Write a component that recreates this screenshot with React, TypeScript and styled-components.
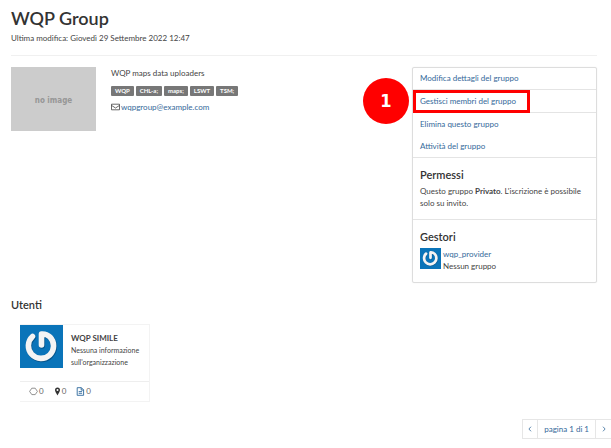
import React from "react";
import styled, { createGlobalStyle, css } from "styled-components";

const GlobalStyle = createGlobalStyle`
  *, *::before, *::after { box-sizing: border-box; }
  body {
    margin: 0;
    background: #fff;
    color: #444;
    font: 8px/12px Lato, sans-serif;
    overflow-x: hidden;
  }
  h1, h2, h3, p, ul { margin: 0; padding: 0; }
  ul { list-style: none; }
`;

const Page = styled.main`
  padding: 8px 14px 0 11px;
`;

const Header = styled.header`
  height: 48px;
  border-bottom: 1px solid #f0f0f0;
`;

const Title = styled.h1`
  color: #333;
  font-size: 18px;
  line-height: 20px;
  font-weight: 600;
`;

const Modified = styled.p`
  margin-top: 4px;
`;

const Columns = styled.div`
  display: grid;
  grid-template-columns: 85px 1fr 185px;
  column-gap: 15px;
  align-items: start;
  margin-top: 11px;
`;

const Placeholder = styled.div`
  display: flex;
  align-items: center;
  justify-content: center;
  height: 64px;
  padding-top: 4px;
  background: #ccc;
  color: #969696;
  font: bold 8px/12px "DejaVu Sans Condensed", "DejaVu Sans", sans-serif;
`;

const Tags = styled.ul`
  display: flex;
  gap: 2px;
  margin-top: 7px;
`;

const Tag = styled.li`
  padding: 0 4px;
  border-radius: 1px;
  background: #777;
  color: #fff;
  font-size: 6px;
  line-height: 10px;
  font-weight: 700;
`;

const Link = styled.a`
  color: #34699a;
  text-decoration: none;
`;

const Mail = styled.p`
  display: flex;
  align-items: center;
  gap: 1px;
  margin-top: 5px;
`;

const Panel = styled.aside`
  border: 1px solid #ddd;
  border-radius: 2px;
  box-shadow: 0 0 1px #ddd;
`;

const Action = styled.li<{ $divided?: boolean }>`
  position: relative;
  padding: 5px 7px;
  height: 22px;
  ${(p) => p.$divided && css`
    height: 23px;
    border-bottom: 1px solid #e4e4e4;
  `}
  &:first-child {
    height: 22px;
    padding-top: 4px;
  }
`;

const Highlight = styled.span`
  position: absolute;
  top: 0;
  left: 0;
  width: 117px;
  height: 23px;
  border: 3px solid #f00;
`;

const Step = styled.span`
  position: absolute;
  top: -12px;
  left: -50px;
  width: 46px;
  height: 46px;
  border-radius: 50%;
  background: #f00;
  color: #fff;
  font: bold 18px/46px "DejaVu Sans Condensed", "DejaVu Sans", sans-serif;
  text-align: center;
`;

const Section = styled.section`
  padding: 10px 7px;
  border-top: 1px solid #e4e4e4;
`;

const Heading = styled.h2`
  color: #333;
  font-size: 11px;
  line-height: 14px;
  font-weight: 600;
`;

const SectionText = styled.p`
  margin-top: 3px;
`;

const Manager = styled.div`
  display: flex;
  gap: 2px;
  margin-top: 4px;
`;

const Users = styled.section`
  margin-top: 15px;
`;

const Card = styled.article`
  width: 130px;
  margin: 12px 0 0 9px;
  border: solid #f3f3f3;
  border-width: 1px 1px 1px 0;
`;

const CardBody = styled.div`
  display: flex;
  gap: 8px;
  height: 56px;
`;

const CardText = styled.div`
  padding-top: 7px;
  font-size: 7px;
`;

const UserName = styled.h3`
  font-size: 8px;
  line-height: 12px;
  font-weight: 700;
`;

const Stats = styled.ul`
  display: flex;
  gap: 10px;
  padding: 3px 9px 4px;
  border-top: 1px solid #eee;
  color: #666;
`;

const Stat = styled.li`
  display: flex;
  align-items: center;
  gap: 1px;
`;

const Pager = styled.nav`
  display: flex;
  justify-content: flex-end;
  margin: 17px -17px 0 0;
`;

const PageButton = styled.button`
  height: 20px;
  margin-left: -1px;
  padding: 0 5px;
  border: 1px solid #e6e6e6;
  background: #fff;
  color: #34699a;
  font: 8px/18px Lato, sans-serif;
  &:last-child { padding: 0 7px 0 6px; }
`;

const PageLabel = styled.span`
  height: 20px;
  margin-left: -1px;
  padding: 0 6px;
  border: 1px solid #e6e6e6;
  color: #34699a;
  line-height: 18px;
`;

const Icon = styled.svg`
  display: block;
  flex: none;
`;

function Avatar({ size }: { size: number }) {
  return (
    <Icon width={size} height={size} viewBox="0 0 43 43" aria-hidden="true">
      <rect width="43" height="43" fill="#0a74b9" />
      <g fill="none" strokeLinecap="round" strokeLinejoin="round">
        <path d="M12.5 11.5A12.6 12.6 0 1 0 30 12Q26.5 8.6 21.5 9V20" stroke="#06558c" strokeWidth="6" transform="translate(0.6 0.8)" />
        <path d="M12.5 11.5A12.6 12.6 0 1 0 30 12Q26.5 8.6 21.5 9V20" stroke="#f4f4f4" strokeWidth="5.6" />
      </g>
    </Icon>
  );
}

const tags = ["WQP", "CHL-a;", "maps;", "LSWT", "TSM;"];

export default function App() {
  return (
    <>
      <GlobalStyle />
      <Page>
        <Header>
          <Title>WQP Group</Title>
          <Modified>Ultima modifica: Giovedì 29 Settembre 2022 12:47</Modified>
        </Header>

        <Columns>
          <Placeholder>no image</Placeholder>
          <div>
            <p>WQP maps data uploaders</p>
            <Tags>
              {tags.map((t) => <Tag key={t}>{t}</Tag>)}
            </Tags>
            <Mail>
              <Icon width="9" height="8" viewBox="0 0 9 8" fill="none" stroke="#444" strokeWidth="0.8" aria-hidden="true">
                <path d="M.5 1.2h8v5.6h-8zM.5 2.4 4.5 5l4-2.6" />
              </Icon>
              <Link href="mailto:wqpgroup@example.com">wqpgroup@example.com</Link>
            </Mail>
          </div>
          <Panel>
            <ul>
              <Action $divided><Link href="#modifica">Modifica dettagli del gruppo</Link></Action>
              <Action $divided>
                <Link href="#membri">Gestisci membri del gruppo</Link>
                <Highlight />
                <Step>1</Step>
              </Action>
              <Action><Link href="#elimina">Elimina questo gruppo</Link></Action>
              <Action><Link href="#attivita">Attività del gruppo</Link></Action>
            </ul>
            <Section>
              <Heading>Permessi</Heading>
              <SectionText>
                Questo gruppo <b>Privato</b>. L'iscrizione è possibile solo su invito.
              </SectionText>
            </Section>
            <Section>
              <Heading>Gestori</Heading>
              <Manager>
                <Avatar size={21} />
                <div>
                  <Link href="#wqp_provider">wqp_provider</Link>
                  <p>Nessun gruppo</p>
                </div>
              </Manager>
            </Section>
          </Panel>
        </Columns>

        <Users>
          <Heading>Utenti</Heading>
          <Card>
            <CardBody>
              <Avatar size={43} />
              <CardText>
                <UserName>WQP SIMILE</UserName>
                <p>Nessuna informazione sull'organizzazione</p>
              </CardText>
            </CardBody>
            <Stats>
              <Stat>
                <Icon width="9" height="9" viewBox="0 0 9 9" fill="none" stroke="#777" strokeWidth="0.8" aria-hidden="true">
                  <path d="M2.8 1.2h3.4l2.2 3.2-2.2 3.2H2.8L.6 4.4z" />
                </Icon>
                0
              </Stat>
              <Stat>
                <Icon width="7" height="9" viewBox="0 0 7 9" fill="#333" aria-hidden="true">
                  <path fillRule="evenodd" d="M3.5.6A2.5 2.5 0 0 0 1 3.1C1 4.7 3.5 8.5 3.5 8.5S6 4.7 6 3.1A2.5 2.5 0 0 0 3.5.6zm0 1.5a1 1 0 1 1 0 2 1 1 0 0 1 0-2z" />
                </Icon>
                0
              </Stat>
              <Stat>
                <Icon width="9" height="9" viewBox="0 0 9 9" fill="none" stroke="#2c689c" strokeWidth="0.9" aria-hidden="true">
                  <path d="M1.2.7h4.2l2.2 2.2v5.4H1.2zM5.2.7v2.4h2.4M2.7 4.6h3.4M2.7 6.3h3.4" />
                </Icon>
                0
              </Stat>
            </Stats>
          </Card>
        </Users>

        <Pager aria-label="Paginazione">
          <PageButton aria-label="Precedente">
            <Icon width="4" height="6" viewBox="0 0 4 6" fill="none" stroke="currentColor" strokeWidth="0.8"><path d="M3 .7.9 3 3 5.3" /></Icon>
          </PageButton>
          <PageLabel>pagina 1 di 1</PageLabel>
          <PageButton aria-label="Successiva">
            <Icon width="4" height="6" viewBox="0 0 4 6" fill="none" stroke="currentColor" strokeWidth="0.8"><path d="M1 .7 3.1 3 1 5.3" /></Icon>
          </PageButton>
        </Pager>
      </Page>
    </>
  );
}
